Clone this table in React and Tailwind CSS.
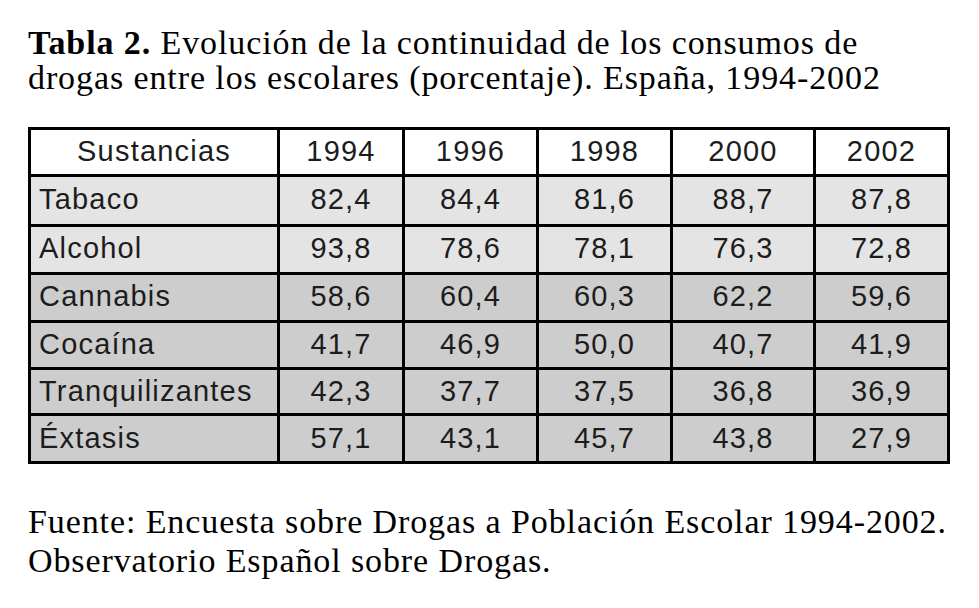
import React from 'react';

const rows = [
  { name: 'Tabaco', values: ['82,4', '84,4', '81,6', '88,7', '87,8'], h: 'h-[50px]', bg: 'bg-[#e4e4e4]' },
  { name: 'Alcohol', values: ['93,8', '78,6', '78,1', '76,3', '72,8'], h: 'h-[48px]', bg: 'bg-[#e4e4e4]' },
  { name: 'Cannabis', values: ['58,6', '60,4', '60,3', '62,2', '59,6'], h: 'h-[48px]', bg: 'bg-[#cdcdcd]' },
  { name: 'Cocaína', values: ['41,7', '46,9', '50,0', '40,7', '41,9'], h: 'h-[47px]', bg: 'bg-[#cdcdcd]' },
  { name: 'Tranquilizantes', values: ['42,3', '37,7', '37,5', '36,8', '36,9'], h: 'h-[46px]', bg: 'bg-[#cdcdcd]' },
  { name: 'Éxtasis', values: ['57,1', '43,1', '45,7', '43,8', '27,9'], h: 'h-[48px]', bg: 'bg-[#cdcdcd]' },
];

const years = ['1994', '1996', '1998', '2000', '2002'];
const colW = ['w-[125px]', 'w-[134px]', 'w-[134px]', 'w-[143px]', 'w-[134px]'];

export default function App() {
  return (
    <div className="w-[979px] h-[608px] bg-white text-black px-[28px] pt-[25px]">
      {/* Caption */}
      <p className="font-['Liberation_Serif',serif] text-[34px] leading-[35px] tracking-[0.9px] w-[940px]">
        <span className="font-bold">Tabla 2.</span> Evolución de la continuidad de los consumos de
        <br />
        drogas entre los escolares (porcentaje). España, 1994-2002
      </p>

      {/* Data table */}
      <table className="mt-[32px] w-[919px] border-collapse border-[3px] border-black font-['Liberation_Sans',Arial,sans-serif] text-[29px] tracking-[1.2px] text-[#1c1c1c] table-fixed">
        <thead>
          <tr className="h-[46px] bg-white">
            <th className="w-[249px] border-[3px] border-black font-normal text-center">Sustancias</th>
            {years.map((y, i) => (
              <th key={y} className={`${colW[i]} border-[3px] border-black font-normal text-center`}>{y}</th>
            ))}
          </tr>
        </thead>
        <tbody>
          {rows.map((r) => (
            <tr key={r.name} className={`${r.h} ${r.bg}`}>
              <td className="border-[3px] border-black pl-[8px] text-left">{r.name}</td>
              {r.values.map((v, i) => (
                <td key={i} className="border-[3px] border-black text-center">{v}</td>
              ))}
            </tr>
          ))}
        </tbody>
      </table>

      {/* Source */}
      <p className="mt-[38px] font-['Liberation_Serif',serif] text-[34px] leading-[39px] tracking-[0.9px] w-[940px]">
        Fuente: Encuesta sobre Drogas a Población Escolar 1994-2002.
        <br />
        Observatorio Español sobre Drogas.
      </p>
    </div>
  );
}
